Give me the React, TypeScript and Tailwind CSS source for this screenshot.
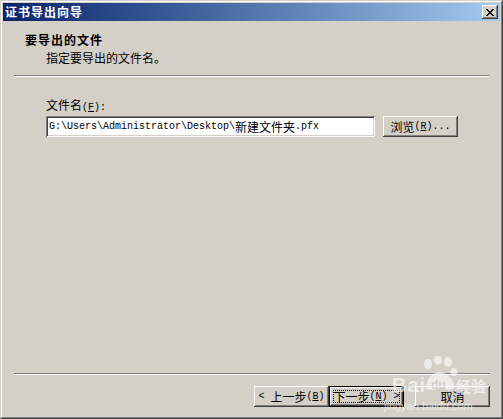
import React from "react";

const raised =
  "shadow-[inset_-1px_-1px_#404040,inset_1px_1px_#ffffff,inset_-2px_-2px_#808080,inset_2px_2px_#d4d0c8]";
const sunken =
  "shadow-[inset_1px_1px_#808080,inset_-1px_-1px_#ffffff,inset_2px_2px_#404040,inset_-2px_-2px_#d4d0c8]";

// ascii bits get the 6px-wide mono look of the old dialog font
function A({ children }: { children: React.ReactNode }) {
  return <span className="font-['Liberation_Mono',monospace] text-[10px] whitespace-pre">{children}</span>;
}

function Btn({ children, def }: { children: React.ReactNode; def?: boolean }) {
  if (def) {
    return (
      <div className="relative h-[21px] w-[75px] border border-black bg-[#d4d0c8]">
        <div className={`flex h-full w-full items-center justify-center ${raised}`}>{children}</div>
        {/* focus rect */}
        <div className="absolute inset-x-[3px] inset-y-[3px] border border-dotted border-black" />
      </div>
    );
  }
  return (
    <div className={`flex h-[21px] w-[75px] items-center justify-center bg-[#d4d0c8] ${raised}`}>
      {children}
    </div>
  );
}

function Sep({ className = "" }: { className?: string }) {
  return <div className={`h-[2px] border-t border-b border-t-[#808080] border-b-white ${className}`} />;
}

export default function App() {
  return (
    <div className="relative h-[419px] w-[503px] overflow-hidden font-['Noto_Sans_CJK_SC',sans-serif] text-[12px] text-black">
      <div className="h-full w-full border border-[#d4d0c8] border-r-[#404040] border-b-[#404040] bg-[#d4d0c8]">
        <div className="flex h-full w-full flex-col border border-white border-r-[#808080] border-b-[#808080] p-px">
          {/* title bar */}
          <div className="flex h-[18px] shrink-0 items-center justify-between bg-gradient-to-r from-[#0a246a] to-[#a6caf0] pl-[2px] pr-[2px]">
            <span className="text-[12px] leading-[16px] font-bold tracking-[1px] text-white">证书导出向导</span>
            <div className={`flex h-[14px] w-[16px] items-center justify-center bg-[#d4d0c8] ${raised}`}>
              <svg width="8" height="7" viewBox="0 0 8 7" shapeRendering="crispEdges">
                <path
                  d="M0 0h2v1h-2zM6 0h2v1h-2zM1 1h2v1h-2zM5 1h2v1h-2zM2 2h4v1h-4zM3 3h2v1h-2zM2 4h4v1h-4zM1 5h2v1h-2zM5 5h2v1h-2zM0 6h2v1h-2zM6 6h2v1h-2z"
                  fill="#000"
                />
              </svg>
            </div>
          </div>

          {/* header */}
          <div className="pt-[11px] pl-[22px]">
            <div className="text-[12px] leading-[16px] font-bold tracking-[1px]">要导出的文件</div>
            <div className="mt-[2px] pl-[21px] leading-[16px]">指定要导出的文件名。</div>
          </div>
          <Sep className="mt-[9px] ml-[11px] mr-[11px]" />

          {/* file name */}
          <div className="mt-[21px] pl-[43px]">
            <div className="leading-[14px]">
              文件名<A>(<span className="underline">F</span>):</A>
            </div>
            <div className="mt-px flex items-center gap-[8px]">
              <div className={`flex h-[21px] w-[329px] items-center bg-white pl-[3px] ${sunken}`}>
                <span className="font-['Liberation_Mono',monospace] text-[10px] leading-[14px]">G:\Users\Administrator\Desktop\</span>
                <span className="text-[12px] leading-[14px]">新建文件夹</span>
                <span className="font-['Liberation_Mono',monospace] text-[10px] leading-[14px]">.pfx</span>
              </div>
              <Btn>
                浏览<A>(<span className="underline">R</span>)...</A>
              </Btn>
            </div>
          </div>

          <div className="flex-1" />

          <Sep className="ml-[11px] mr-[10px]" />
          <div className="mt-[11px] mb-[9px] flex justify-end pr-[10px]">
            <Btn>
              <A>{"< "}</A>上一步<A>(<span className="underline">B</span>)</A>
            </Btn>
            <Btn def>
              下一步<A>(<span className="underline">N</span>) &gt;</A>
            </Btn>
            <div className="ml-[11px]">
              <Btn>取消</Btn>
            </div>
          </div>
        </div>
      </div>

      {/* watermark */}
      <div className="pointer-events-none absolute left-[384px] top-[356px] h-[60px] w-[110px] text-white opacity-60">
        <svg className="absolute left-[34px] top-[0px]" width="46" height="36" viewBox="0 0 46 36">
          <ellipse cx="10" cy="8" rx="4" ry="5" fill="#fff" />
          <ellipse cx="20" cy="4" rx="4" ry="4.5" fill="#fff" />
          <ellipse cx="30" cy="6" rx="4" ry="5" fill="#fff" />
          <ellipse cx="36" cy="16" rx="3.5" ry="4" fill="#fff" />
          <path d="M8 30c2-10 8-14 14-14s12 6 14 12c1 4-2 7-6 6-3-1-5-2-8-2s-5 2-8 2c-4 0-7-1-6-4z" fill="#fff" />
        </svg>
        <span className="absolute left-[8px] top-[19px] font-['Liberation_Sans',sans-serif] text-[20px] leading-[20px] font-bold tracking-[1px]">
          Bai
        </span>
        <span className="absolute left-[47px] top-[23px] font-['Liberation_Sans',sans-serif] text-[12px] leading-[12px] font-bold text-[#d4d0c8]">
          du
        </span>
        <span className="absolute left-[72px] top-[22px] text-[15px] leading-[16px] font-bold">经验</span>
        <span className="absolute left-[0px] top-[44px] font-['Liberation_Sans',sans-serif] text-[11px] leading-[12px]">
          jingyan.baidu.com
        </span>
      </div>
    </div>
  );
}
